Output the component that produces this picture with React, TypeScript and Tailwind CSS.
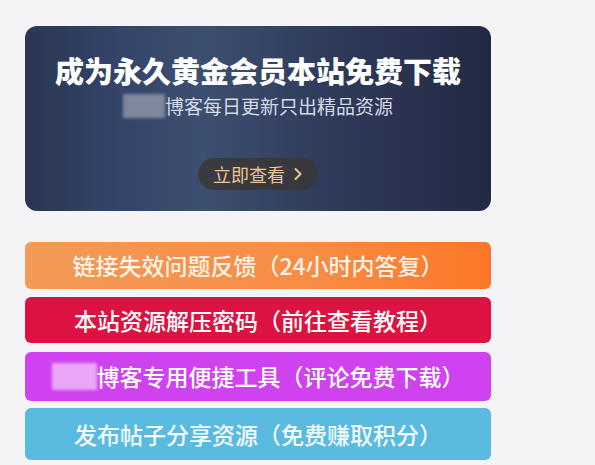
const cjk = { fontFamily: '"Noto Sans CJK SC", "Noto Sans", sans-serif' }

function Blur({ className }: { className: string }) {
  return <span className={`inline-block align-middle blur-[1.5px] ${className}`} />
}

const links = [
  { text: '链接失效问题反馈（24小时内答复）', cls: 'h-[47px] bg-[linear-gradient(90deg,#f29a58,#f88d45_60%,#fd7628)] text-[#fff3e8]' },
  { text: '本站资源解压密码（前往查看教程）', cls: 'h-[46px] mt-[8px] bg-[#dc1341] text-white' },
  { text: '博客专用便捷工具（评论免费下载）', cls: 'h-[49px] mt-[9px] bg-[#d042ef] text-white', blur: true },
  { text: '发布帖子分享资源（免费赚取积分）', cls: 'h-[52px] mt-[7px] bg-[#5bbadf] text-[#f2fbff]' },
]

export default function App() {
  return (
    <div className="w-[595px] h-[465px] bg-[#f4f4f7] overflow-hidden" style={cjk}>
      <div className="pl-[25px] pt-[26px] w-[491px]">
        {/* banner */}
        <div className="h-[185px] rounded-[12px] bg-[linear-gradient(90deg,#2a3652_0%,#34446a_20%,#3d4f70_38%,#2f3b5b_65%,#232944_100%)] flex flex-col items-center pt-[28px]">
          <div className="text-[29px] leading-[32px] font-black text-white">
            成为永久黄金会员本站免费下载
          </div>
          <div className="mt-[8px] text-[19px] leading-[24px] text-[#d3d9e6] flex items-center">
            <Blur className="w-[42px] h-[24px] bg-[#7e879b]" />
            博客每日更新只出精品资源
          </div>
          <div className="mt-[40px] h-[32px] w-[120px] rounded-full bg-[#3a3636]/80 flex items-center justify-center gap-[8px] text-[18px] text-[#ecc58c]">
            <span>立即查看</span>
            <svg width="10" height="14" viewBox="0 0 10 14" fill="none">
              <path d="M2.5 2 L7.5 7 L2.5 12" stroke="#ecc58c" strokeWidth="2" strokeLinecap="round" strokeLinejoin="round" />
            </svg>
          </div>
        </div>

        {/* quick links */}
        <div className="mt-[31px] flex flex-col">
          {links.map((l) => (
            <div
              key={l.text}
              className={`rounded-[6px] flex items-center justify-center text-[23px] font-medium ${l.cls}`}
            >
              {l.blur && <Blur className="w-[45px] h-[27px] bg-[#eaa6f6]" />}
              {l.text}
            </div>
          ))}
        </div>
      </div>
    </div>
  )
}
